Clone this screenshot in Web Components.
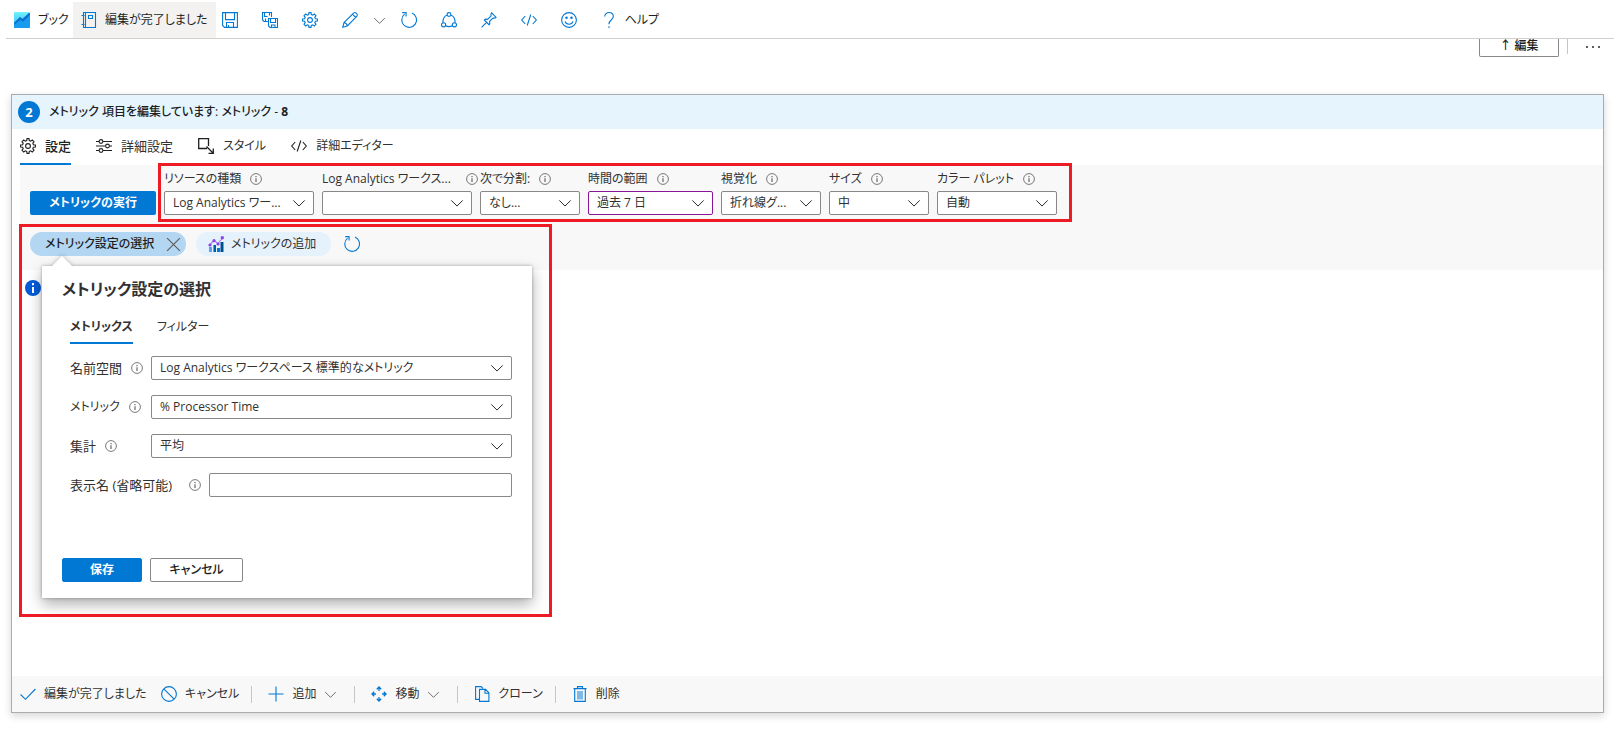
<!DOCTYPE html>
<html lang="ja">
<head>
<meta charset="utf-8">
<title>ブック - メトリック</title>
<style>
  html { height: 100%; }
  body { margin: 0; min-height: 100%; background: #fff; color: #323130;
    font: 12px/16px "Open Sans", "Noto Sans CJK JP", sans-serif; font-feature-settings: "palt"; }
</style>
</head>
<body>
<workbook-app></workbook-app>
<script>
const RESET = `
  *, *::before, *::after { box-sizing: border-box; }
  button, input, select { font: inherit; font-feature-settings: inherit; color: inherit; margin: 0; }
  button { background: none; border: 0; padding: 0; cursor: pointer; white-space: nowrap; }
`;
const ICONS = {
  book: `<defs><linearGradient id="g" x1="0" y1="0" x2="0" y2="1"><stop offset="0" stop-color="#6ff3fd"/><stop offset="1" stop-color="#35b9f1"/></linearGradient><linearGradient id="h" x1="0" y1="0" x2="0" y2="1"><stop offset="0" stop-color="#1b93eb"/><stop offset="1" stop-color="#0c7fe0"/></linearGradient></defs><rect width="16" height="16" rx="1" fill="url(#g)" stroke="none"/><path d="M0 11l6-6 2.500 2L15 1l1 0V15l-1 1H1l-1-1z" fill="url(#h)" stroke="none"/><path d="M0 11l6-6 2.500 2L15 1l1 0V3L9 10 6.500 8 0 13z" fill="#0f6fd0" stroke="none"/><path d="M0 13l6.500-5L9 10l7-7V15l-1 1H1l-1-1z" fill="#189cee" stroke="none"/>`,
  notebook: `<path d="M2.500.5h12v15h-12zM4.500.5v15M.5 3.500h3M.5 12.500h3M7.500 3.500h4v3h-4z"/>`,
  save: `<path d="M.6.6h14.800v14.800H2.500L.6 13.500zM3.500.6v7h9v-7M4.500 15.400v-4.900h7v4.900M6.500 13v2.400"/>`,
  saveall: `<path d="M6 9.500H2L.5 8V.5h9V5M2.500.5v4h3M7.500.5v3M6.500 6.500h9v9H8L6.500 14zM8.500 6.500v4h5v-4M9.500 15.500v-2.500h3.500v2.500M3.500 9V6.500"/>`,
  gear: `<circle cx="8" cy="8" r="2.400"/><path d="M6.700 2.600L7 .6h2l.3 2 1.400.6L12.300 2l1.700 1.700-1.200 1.600.6 1.400 2 .3v2l-2 .3-.6 1.400 1.200 1.600-1.700 1.700-1.600-1.200-1.400.6-.3 2H7l-.3-2-1.400-.6L3.700 14 2 12.300l1.200-1.600-.6-1.400-2-.3V7l2-.3.6-1.400L2 3.700 3.700 2l1.600 1.200z"/>`,
  pencil: `<path d="M.8 15.200l1.200-4.700L11.800.9c1.600-1.200 4.500 1.500 3.200 3.300L5.300 14zM10.500 2.200l3.200 3.300M2 10.500c1.800.3 3 1.600 3.300 3.500"/>`,
  chevron: `<path d="M1.500 5L8 11.500 14.500 5"/>`,
  refresh: `<path d="M11 1.100A7.400 7.400 0 1 1 3.600 2.100M1.200.6h3.900v3.900"/>`,
  share: `<circle cx="8" cy="2.500" r="1.900"/><circle cx="2.600" cy="12.800" r="2.100"/><circle cx="13.400" cy="12.800" r="2.100"/><path d="M6 3.200C3.200 4 1.900 6.200 1.900 10.700M10 3.200c2.800.8 4.100 3 4.100 7.500M4.700 13.800c2 1 4.600 1 6.600 0"/>`,
  pin: `<path d="M.6 15.400l5-5M3.300 8l4.700 4.700c1-.8 1-2 .6-3.300l3.500-3.500c1 .4 2 .4 3-.5L10.600.9c-.9 1-.9 2-.5 3L6.600 7.400C5.300 7 4.100 7 3.300 8z"/>`,
  code: `<path d="M4.200 4L.7 8l3.500 4M11.800 4l3.500 4-3.500 4M9.800 2.500l-3.600 11"/>`,
  smile: `<circle cx="8" cy="8" r="7.400"/><circle cx="5.500" cy="5.700" r=".7" fill="currentColor"/><circle cx="10.500" cy="5.700" r=".7" fill="currentColor"/><path d="M4 9.500c1.300 3.600 6.700 3.600 8 0"/>`,
  help: `<path d="M3.700 4.600C3.700-.8 12.300-.8 12.300 4.600 12.300 8 8 7.700 8 12.300M8 14.300V16"/>`,
  sliders: `<path d="M0 3.500h3M7 3.500h9M0 8h9.500M13.500 8H16M0 12.500h3M7 12.500h9"/><circle cx="5" cy="3.500" r="1.900"/><circle cx="11.500" cy="8" r="1.900"/><circle cx="5" cy="12.500" r="1.900"/>`,
  style: `<path d="M10.500 8V.7H.7v9.800H9M8.500 8.500l6.500 6.500M15.300 10.500v4.800h-4.800" stroke-width="1.300"/>`,
  info: `<circle cx="8" cy="8" r="7.200"/><path d="M8 7v5M8 4v1.500" stroke-width="1.500"/>`,
  infofill: `<circle cx="8" cy="8" r="8" fill="#015cda" stroke="none"/><path d="M8 7v6M8 3v2.300" stroke="#fff" stroke-width="2"/>`,
  close: `<path d="M2 2l12 12M14 2L2 14"/>`,
  metric: `<g stroke="none"><path fill="#5ea0ef" d="M1 11h3v5H1z"/><path fill="#005ba1" d="M5 9h3v7H5z"/><path fill="#5ea0ef" d="M5 9h1v7H5z"/><path fill="#0078d4" d="M9 12h3v4H9z"/><path fill="#004f91" d="M12.500 6h3v10h-3z"/></g><path stroke="#a67af4" d="M2 8.500l4-4 4 3L14.500 2" fill="none"/><g fill="#8644e8" stroke="none"><circle cx="2" cy="9" r="1.600"/><circle cx="6" cy="4.700" r="1.600"/><circle cx="10" cy="8" r="1.600"/><circle cx="14.300" cy="1.700" r="1.700"/></g>`,
  check: `<path d="M.6 8.500L5.500 13.300 15.400 3"/>`,
  ban: `<circle cx="8" cy="8" r="7.400"/><path d="M2.800 2.800l10.400 10.400"/>`,
  plus: `<path d="M8 .5v15M.5 8h15"/>`,
  move: `<path d="M5.800 3.200L8 1l2.200 2.200M5.800 12.800L8 15l2.200-2.200M3.200 5.800L1 8l2.200 2.200M12.800 5.800L15 8l-2.200 2.200M8 1v4M8 11v4M1 8h4M11 8h4" stroke-width="1.300"/>`,
  clone: `<path d="M5 13.400H1.600V.6h5.600L9 2.400M5.500 3.400h6l3.400 3.400v8.600H5.500zM11 3.500v3.800h3.800"/>`,
  trash: `<path d="M5 5h6v8.500H5z" fill="#7fb9e8" stroke="none"/><path d="M1.500 2.600h13M5.500 2.500V.6h5v1.900M2.700 2.600v12.800h10.600V2.600"/>`,
  dots: `<g fill="currentColor" stroke="none"><path d="M1 7h2v2H1zM7 7h2v2H7zM13 7h2v2h-2z"/></g>`
};

customElements.define('ui-icon', class extends HTMLElement {
  connectedCallback() {
    if (this.shadowRoot) return;
    this.attachShadow({ mode: 'open' }).innerHTML = `<style>
      :host { display: inline-block; flex: none; width: 16px; height: 16px; }
      svg { display: block; width: 100%; height: 100%; overflow: visible; }
    </style><svg viewBox="0 0 16 16" fill="none" stroke="currentColor" stroke-width="1.100" aria-hidden="true">${ICONS[this.getAttribute('name')]}</svg>`;
  }
});

/* Toolbar command: icon, optional text, optional menu chevron */
customElements.define('tool-button', class extends HTMLElement {
  connectedCallback() {
    if (this.shadowRoot) return;
    const text = this.textContent.trim();
    this.attachShadow({ mode: 'open' }).innerHTML = `<style>${RESET}
      :host { display: flex; align-self: stretch; }
      button { display: flex; align-items: center; padding: 0; gap: 8px; min-width: var(--w, auto); }
      ui-icon { color: #0078d4; }
      .menu { color: #605e5c; width: 13px; height: 13px; }
      :host([active]) { background: #f3f2f1; }
      :host([active]) button { padding: 0 8px; }
    </style><button type="button" aria-label="${this.getAttribute('label') || text}">
      ${this.hasAttribute('icon') ? `<ui-icon name="${this.getAttribute('icon')}"></ui-icon>` : ''}
      ${text ? '<span><slot></slot></span>' : ''}
      ${this.hasAttribute('menu') ? '<ui-icon class="menu" name="chevron"></ui-icon>' : ''}</button>`;
  }
});

customElements.define('book-toolbar', class extends HTMLElement {
  connectedCallback() {
    this.attachShadow({ mode: 'open' }).innerHTML = `<style>${RESET}
      :host { display: flex; height: 39px; margin-left: 6px; padding: 2px 0 0 8px; border-bottom: 1px solid #d2d0ce; color: #201f1e; }
      .first { --w: 59px; }
      .done { --w: 141px; }
      nav { display: flex; gap: 24px; padding-left: 6px; }
      .drop { margin: 0 -9px; --w: 13px; }
    </style>
    <tool-button class="first" icon="book">ブック</tool-button>
    <tool-button class="done" icon="notebook" active>編集が完了しました</tool-button>
    <nav>
      <tool-button icon="save" label="保存"></tool-button>
      <tool-button icon="saveall" label="名前を付けて保存"></tool-button>
      <tool-button icon="gear" label="設定"></tool-button>
      <tool-button icon="pencil" label="編集"></tool-button>
      <tool-button class="drop" menu label="その他の編集"></tool-button>
      <tool-button icon="refresh" label="更新"></tool-button>
      <tool-button icon="share" label="共有"></tool-button>
      <tool-button icon="pin" label="ピン留め"></tool-button>
      <tool-button icon="code" label="コード"></tool-button>
      <tool-button icon="smile" label="フィードバック"></tool-button>
      <tool-button icon="help">ヘルプ</tool-button>
    </nav>`;
  }
});

/* Drop-down drawn over a native select */
customElements.define('drop-down', class extends HTMLElement {
  connectedCallback() {
    if (this.shadowRoot) return;
    this.attachShadow({ mode: 'open' }).innerHTML = `<style>${RESET}
      :host { display: grid; min-width: 0; align-items: center; }
      select, ui-icon { grid-area: 1 / 1; }
      select { appearance: none; width: 100%; height: 24px; padding: 0 24px 0 8px; background: #fff; border: 1px solid #8a8886; border-radius: 2px; }
      :host([edited]) select { border-color: #881798; }
      ui-icon { justify-self: end; margin-right: 8px; width: 14px; height: 14px; color: #201f1e; pointer-events: none; }
    </style><select aria-label="${this.getAttribute('label')}"><option>${this.getAttribute('value')}</option></select><ui-icon name="chevron"></ui-icon>`;
  }
});

/* Label above a drop-down */
customElements.define('param-field', class extends HTMLElement {
  connectedCallback() {
    const a = n => this.getAttribute(n);
    this.attachShadow({ mode: 'open' }).innerHTML = `<style>${RESET}
      :host { display: block; width: var(--w, 100px); }
      label { display: flex; align-items: center; gap: 9px; height: 24px; white-space: nowrap; color: #323130; }
      :host([wide]) label { gap: 0; margin-right: -6px; justify-content: space-between; }
      ui-icon { width: 12px; height: 12px; color: #605e5c; }
    </style>
    <label><span>${a('label')}</span><ui-icon name="info"></ui-icon></label>
    <drop-down label="${a('label')}" value="${a('value')}" ${this.hasAttribute('edited') ? 'edited' : ''}></drop-down>`;
  }
});

/* Label beside its control */
customElements.define('form-row', class extends HTMLElement {
  connectedCallback() {
    const l = this.getAttribute('label'), v = this.getAttribute('value');
    this.attachShadow({ mode: 'open' }).innerHTML = `<style>${RESET}
      :host { display: flex; align-items: center; height: 24px; }
      label { display: flex; flex: none; align-items: center; gap: 9px; min-width: 81px; padding-right: 8px; white-space: nowrap; font-size: 13px; }
      :host([long]) label { min-width: 139px; justify-content: space-between; }
      .kana { font-size: 12px; }
      ui-icon { width: 12px; height: 12px; color: #605e5c; }
      drop-down, input { flex: 1; min-width: 0; }
      input { height: 24px; border: 1px solid #8a8886; border-radius: 2px; padding: 0 8px; }
    </style>
    <label for="f"><span class="${/[ァ-ヶ]/.test(l) ? 'kana' : ''}">${l}</span><ui-icon name="info"></ui-icon></label>
    ${v ? `<drop-down label="${l}" value="${v}"></drop-down>` : '<input id="f" type="text">'}`;
  }
});

customElements.define('metric-dialog', class extends HTMLElement {
  connectedCallback() {
    this.attachShadow({ mode: 'open' }).innerHTML = `<style>${RESET}
      :host { display: block; background: #fff; width: 490px; padding: 11px 20px 16px; box-shadow: 0 6px 14px rgba(0,0,0,.32), 0 0 3px rgba(0,0,0,.3); }
      :host::before { content: ""; position: absolute; left: 9px; top: -10px; border: 11px solid transparent; border-top: 0; border-bottom: 11px solid #fff; filter: drop-shadow(0 -1px 2px rgba(0,0,0,.2)); clip-path: inset(-8px -8px 1px -8px); }
      h2 { margin: 0; font-size: 16px; line-height: 24px; font-weight: 600; color: #323130; }
      nav { display: flex; gap: 24px; margin: 16px 0 12px 8px; }
      nav button { height: 27px; padding-bottom: 6px; border-bottom: 2px solid transparent; }
      nav [aria-selected=true] { font-weight: 600; border-color: #0078d4; }
      .rows { display: grid; gap: 15px; margin-left: 8px; }
      .actions { display: flex; gap: 8px; margin-top: 61px; }
      .actions button { width: 93px; height: 24px; border: 1px solid #8a8886; border-radius: 2px; font-weight: 500; color: #201f1e; }
      .actions .primary { width: 80px; background: #0078d4; border-color: #0078d4; color: #fff; font-weight: 700; }
    </style>
    <h2>メトリック設定の選択</h2>
    <nav role="tablist"><button role="tab" aria-selected="true">メトリックス</button><button role="tab" aria-selected="false">フィルター</button></nav>
    <div class="rows">
      <form-row label="名前空間" value="Log Analytics ワークスペース 標準的なメトリック"></form-row>
      <form-row label="メトリック" value="% Processor Time"></form-row>
      <form-row label="集計" value="平均"></form-row>
      <form-row long label="表示名 (省略可能)"></form-row>
    </div>
    <div class="actions"><button class="primary" type="button">保存</button><button type="button">キャンセル</button></div>`;
  }
});

customElements.define('panel-tabs', class extends HTMLElement {
  connectedCallback() {
    this.attachShadow({ mode: 'open' }).innerHTML = `<style>${RESET}
      :host { display: flex; gap: 25px; height: 36px; padding-left: 8px; }
      button { display: flex; align-items: center; gap: 9px; border-bottom: 2px solid transparent; }
      button[aria-selected=true] { border-color: #0078d4; font-weight: 500; color: #201f1e; }
      .kanji { font-size: 13px; }
      .style { min-width: 67px; }
      ui-icon { color: #201f1e; }
    </style>
    <button class="kanji" role="tab" aria-selected="true"><ui-icon name="gear"></ui-icon>設定</button>
    <button class="kanji" role="tab"><ui-icon name="sliders"></ui-icon>詳細設定</button>
    <button class="style" role="tab"><ui-icon name="style"></ui-icon>スタイル</button>
    <button role="tab"><ui-icon name="code"></ui-icon>詳細エディター</button>`;
  }
});

customElements.define('metric-settings', class extends HTMLElement {
  connectedCallback() {
    this.attachShadow({ mode: 'open' }).innerHTML = `<style>${RESET}
      :host { display: block; margin-left: 8px; padding: 2px 0 14px 10px; background: #f8f8f8; }
      .line { display: flex; align-items: flex-end; gap: 8px; }
      .run { width: 126px; height: 24px; background: #0078d4; color: #fff; border-radius: 2px; font-weight: 700; }
      .fields { position: relative; display: flex; gap: 8px; }
      .fields::after { content: ""; position: absolute; inset: -4px -15px -7px -6px; border: 3px solid #ed1c24; pointer-events: none; }
      .pills { display: flex; align-items: center; gap: 10px; margin-top: 17px; }
      .pill { display: flex; align-items: center; gap: 7px; height: 24px; border-radius: 12px; background: #e5f1fb; padding: 0 12px; width: 135px; }
      .pill.on { width: 156px; background: #b3d6f2; color: #201f1e; padding: 0 4px 0 15px; justify-content: space-between; font-weight: 500; }
      .pill.on ui-icon { color: #605e5c; width: 17px; height: 17px; }
      .again { margin-left: 3px; color: #0078d4; display: flex; }
    </style>
    <div class="line">
      <button class="run" type="button">メトリックの実行</button>
      <div class="fields">
        <param-field style="--w:150px" label="リソースの種類" value="Log Analytics ワー..."></param-field>
        <param-field style="--w:150px" wide label="Log Analytics ワークス..." value=""></param-field>
        <param-field label="次で分割:" value="なし..."></param-field>
        <param-field style="--w:125px" edited label="時間の範囲" value="過去 7 日"></param-field>
        <param-field label="視覚化" value="折れ線グ..."></param-field>
        <param-field label="サイズ" value="中"></param-field>
        <param-field style="--w:120px" label="カラー パレット" value="自動"></param-field>
      </div>
    </div>
    <div class="pills">
      <button class="pill on" type="button"><span>メトリック設定の選択</span><ui-icon name="close"></ui-icon></button>
      <button class="pill" type="button"><ui-icon name="metric"></ui-icon><span>メトリックの追加</span></button>
      <button class="again" type="button" aria-label="更新"><ui-icon name="refresh"></ui-icon></button>
    </div>`;
  }
});

customElements.define('panel-footer', class extends HTMLElement {
  connectedCallback() {
    this.attachShadow({ mode: 'open' }).innerHTML = `<style>${RESET}
      :host { display: flex; align-items: center; height: 36px; padding-left: 8px; background: #f8f8f8; }
      i { width: 1px; height: 17px; background: #c8c6c4; margin: 0 16px 0 12px; }
      .done { --w: 141px; }
      .menu { --w: 74px; }
    </style>
    <tool-button class="done" icon="check">編集が完了しました</tool-button>
    <tool-button icon="ban">キャンセル</tool-button><i></i>
    <tool-button class="menu" icon="plus" menu>追加</tool-button><i></i>
    <tool-button class="menu" icon="move" menu>移動</tool-button><i></i>
    <tool-button icon="clone">クローン</tool-button><i></i>
    <tool-button icon="trash">削除</tool-button>`;
  }
});

customElements.define('metric-panel', class extends HTMLElement {
  connectedCallback() {
    this.attachShadow({ mode: 'open' }).innerHTML = `<style>${RESET}
      :host { display: flex; flex-direction: column; border: 1px solid #a9abad; background: #fff; box-shadow: 0 3px 8px rgba(0,0,0,.16); }
      header { display: flex; align-items: center; gap: 9px; height: 34px; padding-left: 6px; background: #e6f4fe; color: #201f1e; }
      .num { width: 22px; height: 22px; border-radius: 50%; background: #0078d4; color: #fff; font-weight: 700; font-size: 13px; line-height: 22px; text-align: center; }
      h1 { margin: 0; font-size: 12px; font-weight: 500; }
      main { position: relative; flex: 1; min-height: 364px; padding: 10px 13px; }
      .mark { position: absolute; left: 7px; top: -46px; width: 533px; height: 393px; border: 3px solid #ed1c24; pointer-events: none; }
      metric-dialog { position: absolute; left: 30px; top: -4px; }
    </style>
    <header><span class="num">2</span><h1>メトリック 項目を編集しています: メトリック - <b>8</b></h1></header>
    <panel-tabs role="tablist"></panel-tabs>
    <metric-settings></metric-settings>
    <main><ui-icon name="infofill"></ui-icon><metric-dialog role="dialog"></metric-dialog><div class="mark"></div></main>
    <panel-footer></panel-footer>`;
  }
});

customElements.define('workbook-app', class extends HTMLElement {
  connectedCallback() {
    this.attachShadow({ mode: 'open' }).innerHTML = `<style>${RESET}
      :host { display: flex; flex-direction: column; min-height: 100vh; }
      .item { display: flex; justify-content: flex-end; align-items: flex-start; height: 55px; padding-right: 13px; }
      .edit { width: 80px; height: 18px; padding-bottom: 4px; line-height: 12px; border: 1px solid #8a8886; border-top: 0; border-radius: 0 0 2px 2px; font-weight: 500; color: #201f1e; }
      .sep { width: 1px; height: 15px; margin: 0 17px 0 8px; background: #c8c6c4; }
      .more { display: flex; color: #605e5c; }
      metric-panel { flex: 1; margin: 0 10px 16px 11px; }
    </style>
    <book-toolbar></book-toolbar>
    <div class="item"><button class="edit" type="button">↑ 編集</button><span class="sep"></span><button class="more" type="button" aria-label="その他"><ui-icon name="dots"></ui-icon></button></div>
    <metric-panel></metric-panel>`;
  }
});
</script>
</body>
</html>
